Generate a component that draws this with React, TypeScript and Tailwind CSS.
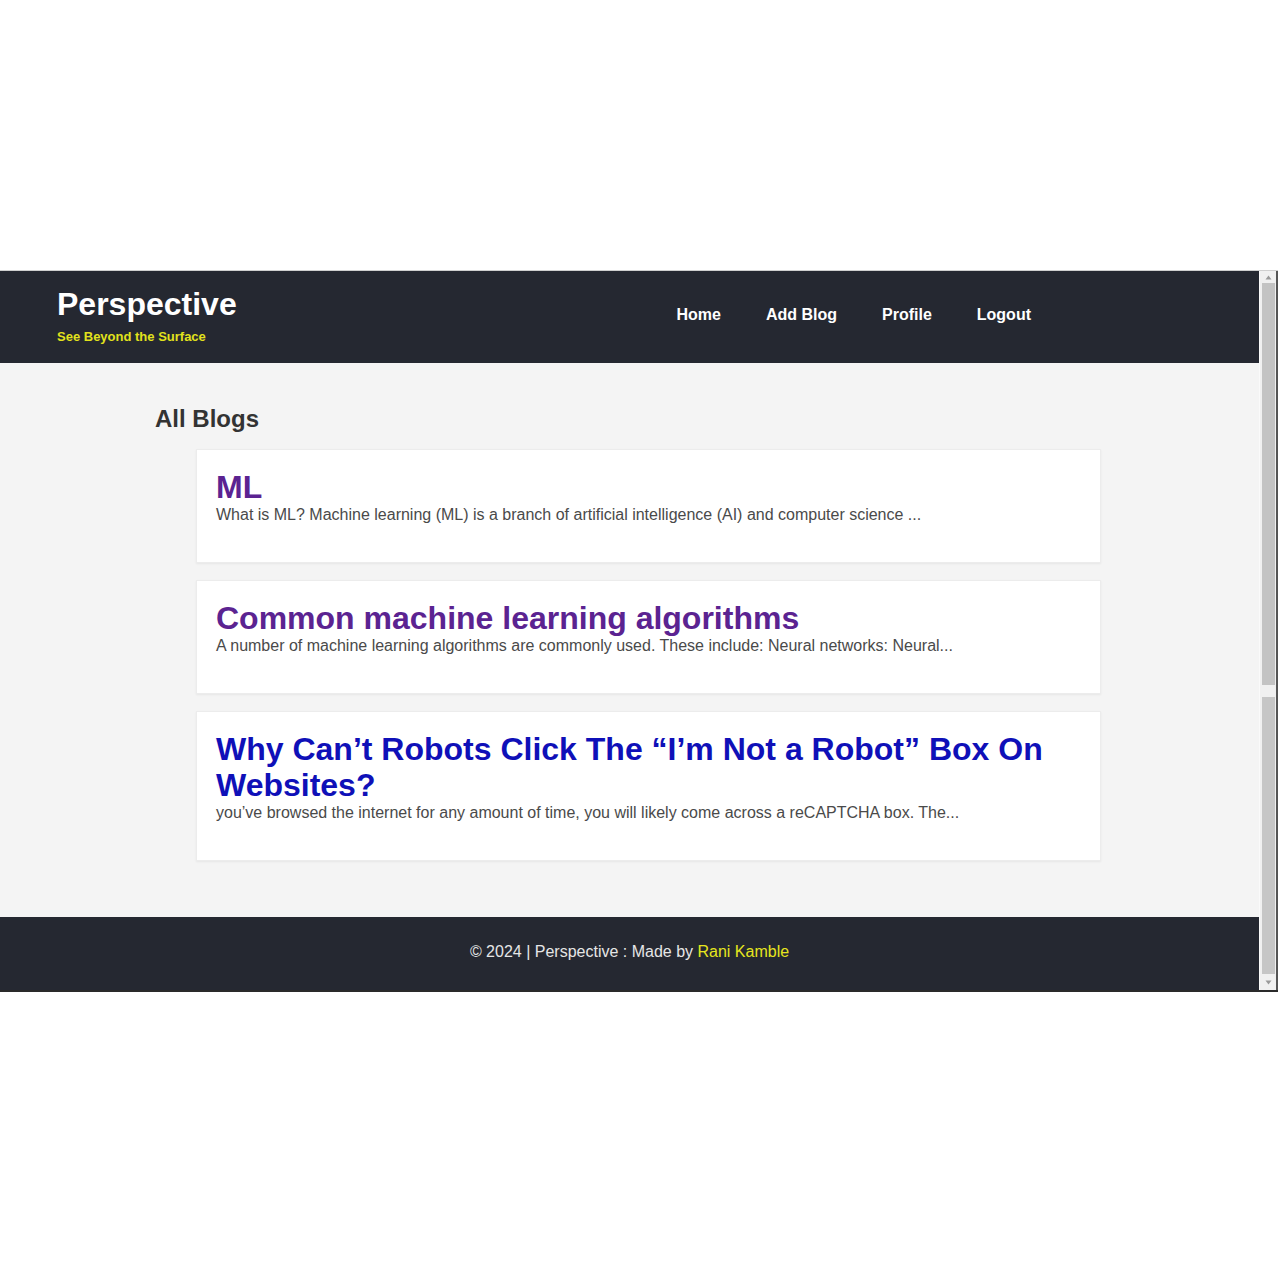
import React from 'react';

const blogs = [
  {
    id: 1,
    title: 'ML',
    excerpt: 'What is ML? Machine learning (ML) is a branch of artificial intelligence (AI) and computer science ...',
    visited: true,
  },
  {
    id: 2,
    title: 'Common machine learning algorithms',
    excerpt: 'A number of machine learning algorithms are commonly used. These include: Neural networks: Neural...',
    visited: true,
  },
  {
    id: 3,
    title: 'Why Can\u2019t Robots Click The \u201cI\u2019m Not a Robot\u201d Box On Websites?',
    excerpt: 'you\u2019ve browsed the internet for any amount of time, you will likely come across a reCAPTCHA box. The...',
    visited: false,
  },
];

export default function App() {
  return (
    <div className="min-h-screen bg-white font-['Liberation_Sans',Arial,sans-serif]">
      <div className="h-[270px]" />

      {/* Browser frame */}
      <div className="flex w-[1278px] border-t border-[#cfcfcf] border-b-2 border-b-[#2a2a2a]">
        <div className="flex-1 flex flex-col">
          {/* Header */}
          <header className="h-[92px] bg-[#252831] flex items-center justify-between pl-[57px] pr-[228px]">
            <div className="flex flex-col pb-[4px]">
              <span className="text-[32px] font-bold text-white leading-[37px]">Perspective</span>
              <span className="text-[13px] font-bold text-[#e2e21c] leading-[15px] mt-[6px]">See Beyond the Surface</span>
            </div>
            <nav className="flex items-center gap-[45px] text-[16px] font-bold text-white pb-[4px]">
              <a>Home</a>
              <a>Add Blog</a>
              <a>Profile</a>
              <a>Logout</a>
            </nav>
          </header>

          {/* Main */}
          <main className="h-[554px] bg-[#f4f4f4] pl-[155px] pt-[42px]">
            <h2 className="text-[24px] font-bold text-[#333] leading-[28px]">All Blogs</h2>
            <div className="ml-[41px] w-[905px] mt-[16px] flex flex-col gap-[17px]">
              {blogs.map((b) => (
                <div
                  key={b.id}
                  className="bg-white border border-[#ececec] shadow-[0_1px_2px_rgba(0,0,0,0.06)] px-[19px] pt-[19px] pb-[19px]"
                >
                  <h3
                    className={`text-[32px] font-bold leading-[36px] ${
                      b.visited ? 'text-[#5b2391]' : 'text-[#0f10b8]'
                    }`}
                  >
                    {b.title}
                  </h3>
                  <p className="text-[16px] text-[#4a4a4a] leading-[20px] mb-[18px]">{b.excerpt}</p>
                </div>
              ))}
            </div>
          </main>

          {/* Footer */}
          <footer className="h-[73px] bg-[#252831] flex items-center justify-center text-[16px] text-[#e6e6e6] pb-[3px]">
            <span>
              © 2024 | Perspective : Made by <span className="text-[#e6e61e]">Rani Kamble</span>
            </span>
          </footer>
        </div>

        {/* Scrollbar */}
        <div className="w-[19px] bg-[#f0f0f0] border-l border-[#fafafa] border-r-2 border-r-[#555] flex flex-col items-center">
          <div className="h-[12px] w-full flex items-center justify-center">
            <svg width="7" height="5" viewBox="0 0 7 5">
              <path d="M3.5 0.5 L6.5 4.5 L0.5 4.5 Z" fill="#9a9a9a" />
            </svg>
          </div>
          <div className="w-[13px] h-[402px] bg-[#c3c3c3]" />
          <div className="h-[12px]" />
          <div className="w-[13px] flex-1 bg-[#c6c6c6]" />
          <div className="h-[16px] w-full flex items-center justify-center">
            <svg width="7" height="5" viewBox="0 0 7 5">
              <path d="M0.5 0.5 L6.5 0.5 L3.5 4.5 Z" fill="#9a9a9a" />
            </svg>
          </div>
        </div>
      </div>
    </div>
  );
}
